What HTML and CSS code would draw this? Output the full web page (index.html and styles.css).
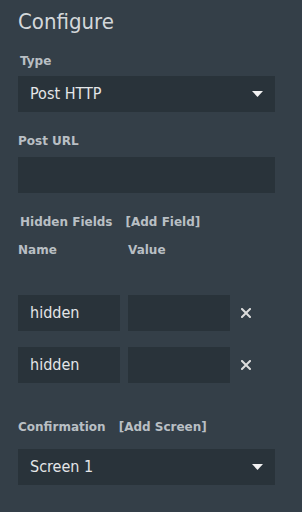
FILE: index.html
```html
<!DOCTYPE html>
<html>
<head>
<meta charset="utf-8">
<link rel="stylesheet" href="styles.css">
</head>
<body>
<div class="panel">
  <h1 class="title">Configure</h1>

  <div class="label label-type">Type</div>
  <div class="select">
    <span>Post HTTP</span>
    <svg class="caret" width="11" height="6" viewBox="0 0 11 6"><polygon points="0,0 11,0 5.5,6" fill="#f2f2f2"/></svg>
  </div>

  <div class="label label-url">Post URL</div>
  <div class="input input-url"></div>

  <div class="label label-hidden">Hidden Fields<span class="link">[Add Field]</span></div>
  <div class="cols label label-cols"><span>Name</span><span>Value</span></div>

  <div class="row row-first">
    <div class="input">hidden</div>
    <div class="input"></div>
    <svg class="remove" width="10" height="10" viewBox="0 0 10 10"><path d="M1 1L9 9M9 1L1 9" stroke="#dcdcdc" stroke-width="2" stroke-linecap="square"/></svg>
  </div>
  <div class="row">
    <div class="input">hidden</div>
    <div class="input"></div>
    <svg class="remove" width="10" height="10" viewBox="0 0 10 10"><path d="M1 1L9 9M9 1L1 9" stroke="#dcdcdc" stroke-width="2" stroke-linecap="square"/></svg>
  </div>

  <div class="label label-confirm">Confirmation<span class="link">[Add Screen]</span></div>
  <div class="select select-confirm">
    <span>Screen 1</span>
    <svg class="caret" width="11" height="6" viewBox="0 0 11 6"><polygon points="0,0 11,0 5.5,6" fill="#f2f2f2"/></svg>
  </div>
</div>
</body>
</html>
```

FILE: styles.css
```css
html, body {
  margin: 0;
  padding: 0;
  background: #343f48;
}
body {
  font-family: "DejaVu Sans Condensed", "DejaVu Sans", sans-serif;
  font-stretch: condensed;
  height: 512px;
  overflow: hidden;
}
.panel {
  width: 257px;
  padding: 9px 0 0 18px;
}
.title {
  margin: 0;
  font-size: 22px;
  line-height: 26px;
  font-weight: normal;
  color: #d3d7da;
}
.label {
  font-family: "DejaVu Sans", sans-serif;
  font-stretch: normal;
  font-size: 12px;
  line-height: 16px;
  font-weight: bold;
  color: #b9bfc4;
}
.label-type { margin-top: 18px; padding-left: 2px; }
.label-url { margin-top: 21px; }
.label-hidden { margin-top: 21px; padding-left: 2px; }
.label-cols { margin-top: 12px; }
.label-confirm { margin-top: 36px; }
.link { margin-left: 13px; }
.cols {
  display: grid;
  grid-template-columns: 110px 110px;
}
.select, .input {
  background: #29333a;
  height: 36px;
  line-height: 36px;
  font-size: 16px;
  color: #e4e6e8;
  padding: 0 12px;
  box-sizing: border-box;
}
.select {
  display: flex;
  align-items: center;
  justify-content: space-between;
  margin-top: 7px;
}
.select span { line-height: 36px; }
.caret { display: block; }
.input-url { margin-top: 8px; }
.select-confirm { margin-top: 14px; }
.row {
  display: grid;
  grid-template-columns: 102px 102px auto;
  column-gap: 8px;
  align-items: center;
  margin-top: 16px;
}
.row-first { margin-top: 37px; }
.remove { display: block; margin-left: 3px; }
```
